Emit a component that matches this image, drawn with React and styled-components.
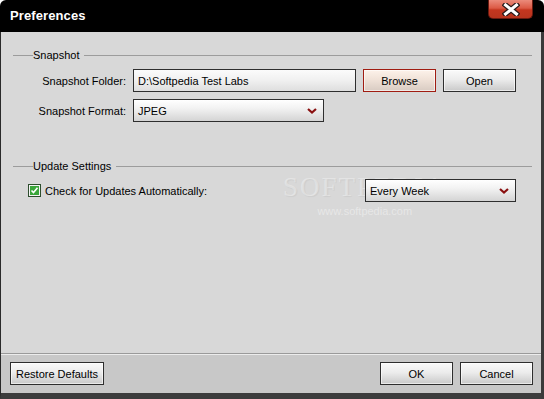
import styled, {createGlobalStyle} from 'styled-components';

const GlobalStyle = createGlobalStyle`
    html, body {
        margin: 0;
        padding: 0;
        background: #ffffff;
    }
    body {
        font-family: "Liberation Sans", Arial, sans-serif;
        font-size: 11px;
        color: #000;
    }
`

const Chevron = () => (
    <svg width="10" height="6" viewBox="0 0 10 6">
        <path d="M1 1 L5 4.5 L9 1" fill="none" stroke="#8a1010" strokeWidth="2.2" />
    </svg>
)

const CheckMark = () => (
    <svg width="13" height="13" viewBox="0 0 13 13">
        <rect x="0.5" y="0.5" width="12" height="12" fill="#f4f4f4" stroke="#2d4d2d" />
        <rect x="2" y="2" width="9" height="9" fill="#3aa63a" />
        <path d="M3.5 6.5 L5.5 8.6 L9.5 3.8" fill="none" stroke="#ffffff" strokeWidth="1.6" />
    </svg>
)

const CloseIcon = () => (
    <svg width="18" height="13" viewBox="0 0 18 13">
        <path d="M3.5 2 L14.5 11 M14.5 2 L3.5 11" stroke="#2a1a1a" strokeWidth="5.5" strokeLinecap="square" />
        <path d="M3.5 2 L14.5 11 M14.5 2 L3.5 11" stroke="#ffffff" strokeWidth="3" strokeLinecap="square" />
    </svg>
)

const App = () => {
    return (
        <>
            <GlobalStyle />
            <Window>
                <TitleBar>
                    <Title>Preferences</Title>
                    <CloseButton><CloseIcon /></CloseButton>
                </TitleBar>
                <Body>
                    <Content>
                        <Watermark>
                            <span>SOFTPEDIA</span>
                            <small>www.softpedia.com</small>
                        </Watermark>
                        <Section>
                            <SectionHeader><span>Snapshot</span></SectionHeader>
                            <FormGrid>
                                <Label>Snapshot Folder:</Label>
                                <Controls>
                                    <TextField width={223}>D:\Softpedia Test Labs</TextField>
                                    <Button width={73} $active>Browse</Button>
                                    <Button width={73}>Open</Button>
                                </Controls>
                                <Label>Snapshot Format:</Label>
                                <Controls>
                                    <Select width={191}>
                                        <span>JPEG</span>
                                        <Chevron />
                                    </Select>
                                </Controls>
                            </FormGrid>
                        </Section>
                        <Section $gap={37}>
                            <SectionHeader><span>Update Settings</span></SectionHeader>
                            <CheckRow>
                                <CheckLabel>
                                    <CheckMark />
                                    <span>Check for Updates Automatically:</span>
                                </CheckLabel>
                                <Select width={151}>
                                    <span>Every Week</span>
                                    <Chevron />
                                </Select>
                            </CheckRow>
                        </Section>
                    </Content>
                    <Footer>
                        <Button width={94}>Restore Defaults</Button>
                        <FooterRight>
                            <Button width={73}>OK</Button>
                            <Button width={73}>Cancel</Button>
                        </FooterRight>
                    </Footer>
                </Body>
            </Window>
        </>
    )
}

const Window = styled.div`
    width: 544px;
    height: 399px;
    background: #000;
    border-radius: 6px 6px 0 0;
    display: flex;
    flex-direction: column;
    overflow: hidden;
`

const TitleBar = styled.div`
    height: 32px;
    flex: none;
    display: flex;
    align-items: flex-start;
    justify-content: space-between;
    padding: 0 11px 0 10px;
`

const Title = styled.h1`
    margin: 8px 0 0;
    font-size: 13px;
    font-weight: bold;
    color: #fff;
    letter-spacing: 0.1px;
`

const CloseButton = styled.div`
    width: 45px;
    height: 19px;
    border-radius: 0 0 5px 5px;
    background: linear-gradient(#eb8b7b 0%, #dc5a45 45%, #c4361f 55%, #b8341e 100%);
    border: 1px solid #6a1a10;
    border-top: none;
    box-sizing: border-box;
    display: flex;
    align-items: center;
    justify-content: center;
`

const Body = styled.div`
    flex: 1;
    display: flex;
    flex-direction: column;
    border-left: 1px solid #2a2a2a;
    border-right: 3px solid #3a3a3a;
    border-bottom: 6px solid #3c3c3c;
    background: #d8d8d8;
`

const Content = styled.div`
    flex: 1;
    position: relative;
    padding: 16px 9px 0 12px;
`

const Section = styled.section`
    position: relative;
    z-index: 1;
    margin-top: ${p => p.$gap || 0}px;
`

const SectionHeader = styled.div`
    display: flex;
    align-items: center;
    height: 14px;
    margin-bottom: 7px;

    &::before {
        content: '';
        width: 20px;
        border-top: 1px solid #9c9c9c;
    }

    &::after {
        content: '';
        flex: 1;
        border-top: 1px solid #9c9c9c;
        margin-left: 5px;
    }
`

const FormGrid = styled.div`
    display: grid;
    grid-template-columns: 113px auto;
    column-gap: 7px;
    row-gap: 7px;
    align-items: center;
`

const Label = styled.label`
    text-align: right;
`

const Controls = styled.div`
    display: flex;
    gap: 7px;
    align-items: center;
`

const fieldBase = `
    box-sizing: border-box;
    height: 23px;
    border: 1px solid #2e2e2e;
    display: flex;
    align-items: center;
    padding: 0 6px 0 4px;
    background: linear-gradient(#ffffff 0%, #f2f2f2 40%, #d4d4d4 100%);
`

const TextField = styled.div`
    ${fieldBase}
    width: ${p => p.width}px;
    background: linear-gradient(#fbfbfb 0%, #f0f0f0 50%, #dedede 100%);
`

const Select = styled.div`
    ${fieldBase}
    width: ${p => p.width}px;
    justify-content: space-between;
    padding-right: 6px;
`

const Button = styled.button`
    box-sizing: border-box;
    width: ${p => p.width}px;
    height: 23px;
    padding: 0;
    font-family: inherit;
    font-size: 11px;
    color: #000;
    border: 1px solid ${p => p.$active ? '#a01d12' : '#2e2e2e'};
    background: ${p => p.$active
        ? 'linear-gradient(#fdf2ea 0%, #f0e2d8 45%, #d8cbc2 100%)'
        : 'linear-gradient(#fafafa 0%, #ececec 45%, #c9c9c9 100%)'};
    box-shadow: inset 0 0 0 1px rgba(255,255,255,0.6);
`

const CheckRow = styled.div`
    display: flex;
    align-items: center;
    justify-content: space-between;
    padding-left: 15px;
    padding-right: 16px;
    margin-top: -1px;
`

const CheckLabel = styled.label`
    display: flex;
    align-items: center;
    gap: 4px;

    svg {
        display: block;
    }
`

const Watermark = styled.div`
    position: absolute;
    left: 282px;
    top: 142px;
    z-index: 0;
    display: flex;
    flex-direction: column;
    align-items: center;
    pointer-events: none;

    span {
        font-family: "Liberation Serif", serif;
        font-size: 27px;
        line-height: 26px;
        letter-spacing: 2px;
        color: rgba(255,255,255,0.35);
        text-shadow: 1px 1px 1px rgba(0,0,0,0.05);
    }

    small {
        font-family: "Liberation Sans", sans-serif;
        font-size: 11px;
        color: rgba(255,255,255,0.4);
        margin-top: 5px;
    }
`

const Footer = styled.div`
    height: 40px;
    box-sizing: border-box;
    flex: none;
    background: #c8c8c8;
    border-top: 1px solid #9a9a9a;
    box-shadow: inset 0 1px 0 #ececec;
    display: flex;
    justify-content: space-between;
    align-items: flex-start;
    padding: 8px 8px 0 9px;
`

const FooterRight = styled.div`
    display: flex;
    gap: 7px;
`

export default App
